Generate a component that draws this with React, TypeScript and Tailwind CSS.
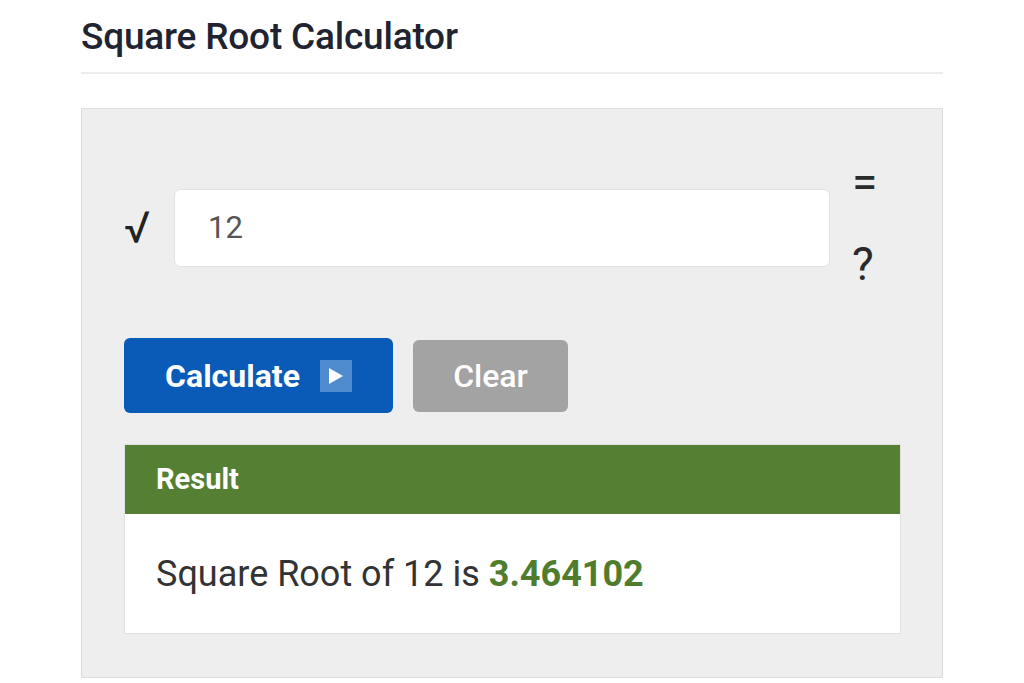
import React from "react";

export default function App() {
  return (
    <div className="w-[1024px] h-[683px] bg-white overflow-hidden" style={{ fontFamily: "Roboto, 'Liberation Sans', sans-serif" }}>
      <div className="ml-[81px] w-[862px] pt-[14px]">
        <h1 className="text-[37px] leading-[46px] font-medium text-[#1f2430] tracking-[-0.2px]">Square Root Calculator</h1>
        <div className="mt-[12px] h-[2px] bg-[#ececec]" />
        <div className="mt-[34px] h-[570px] bg-[#eeeeee] border border-[#dcdcdc] pl-[42px] pr-[42px] pt-[59px]">
          <div className="flex items-center h-[120px]">
            <div className="w-[50px] text-[44px] text-[#222] leading-none">√</div>
            <div className="w-[656px] h-[78px] bg-white rounded-[6px] border border-[#e2e2e2] flex items-center pl-[33px] text-[31px] text-[#555]">12</div>
            <div className="ml-[22px] flex flex-col items-start h-[120px] text-[46px] text-[#2a2a2a] leading-none font-normal">
              <span className="mt-[-9px]">=</span>
              <span className="mt-[36px]">?</span>
            </div>
          </div>
          <div className="mt-[50px] flex items-center gap-[20px]">
            <button className="w-[269px] h-[75px] bg-[#0a5ab8] rounded-[6px] flex items-center justify-center gap-[20px] text-white text-[32px] font-bold">
              <span>Calculate</span>
              <span className="w-[32px] h-[32px] bg-[#4e8ccf] flex items-center justify-center">
                <svg width="16" height="18" viewBox="0 0 16 18"><path d="M1 1 L15 9 L1 17 Z" fill="white" /></svg>
              </span>
            </button>
            <button className="w-[155px] h-[72px] bg-[#a3a3a3] rounded-[6px] flex items-center justify-center text-white text-[32px] font-medium">Clear</button>
          </div>
          <div className="mt-[31px] w-[777px] border border-[#e0e0e0] bg-white">
            <div className="h-[69px] bg-[#557f32] flex items-center pl-[31px] text-white text-[29px] font-bold">Result</div>
            <div className="h-[119px] flex items-center pl-[31px] text-[36px] text-[#333]">
              <span>Square Root of 12 is&nbsp;</span>
              <span className="font-bold text-[#507c2e]">3.464102</span>
            </div>
          </div>
        </div>
      </div>
    </div>
  );
}
